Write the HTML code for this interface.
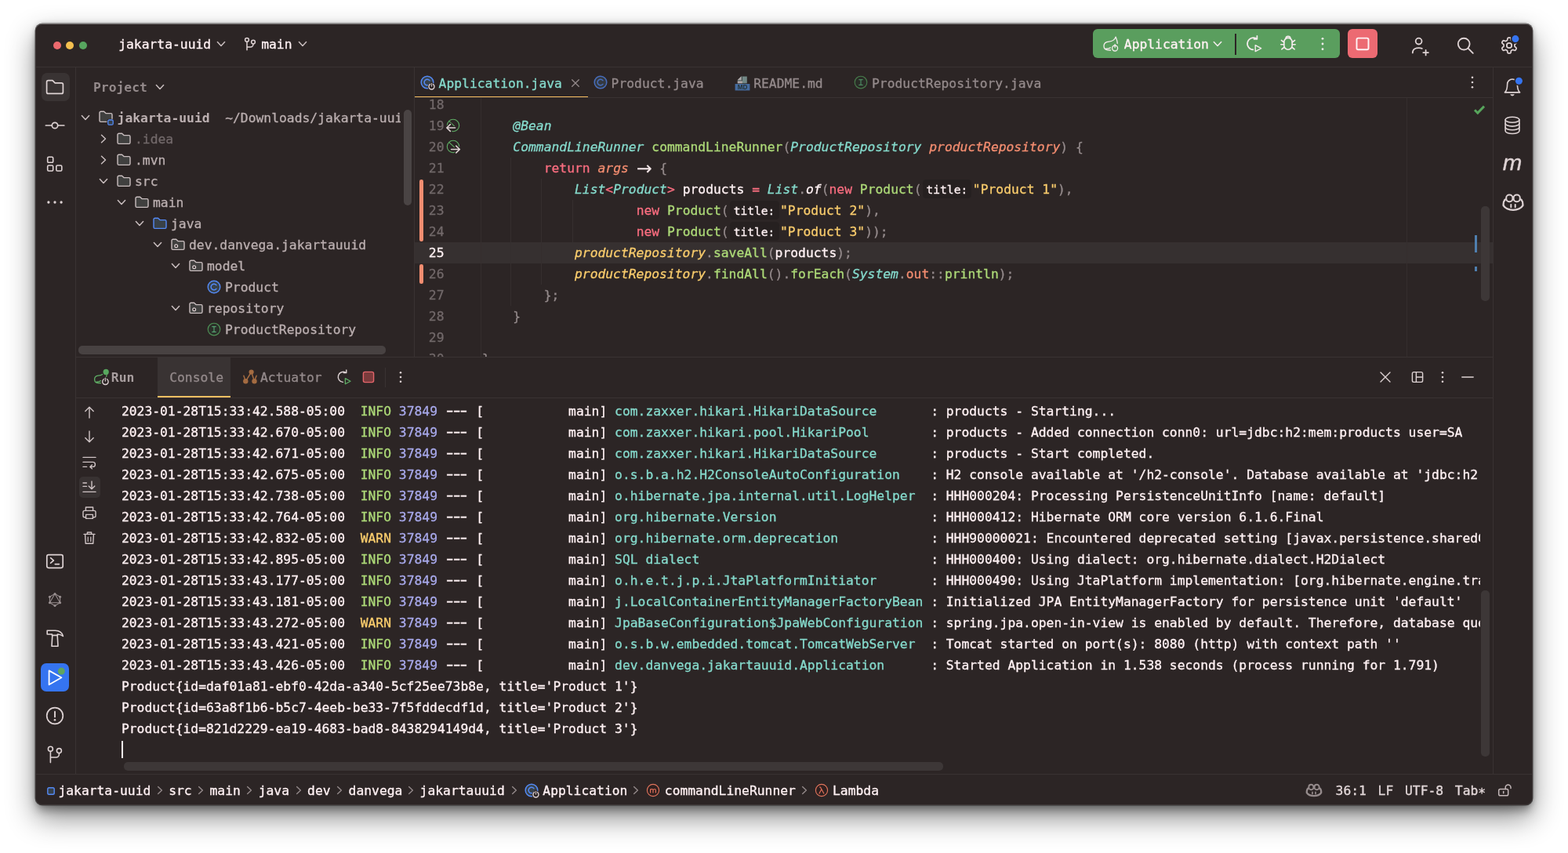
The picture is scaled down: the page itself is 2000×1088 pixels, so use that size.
<!DOCTYPE html>
<html lang="en"><head><meta charset="utf-8"><title>jakarta-uuid – Application.java</title>
<style>
html,body{margin:0;padding:0;background:#fff;}
body{width:2000px;height:1088px;position:relative;overflow:hidden;font-family:"DejaVu Sans Mono","Liberation Mono",monospace;font-size:16.33px;line-height:27px;color:#fff1f3;-webkit-text-stroke:0.3px currentColor;}
#win{position:absolute;left:45.2px;top:30px;width:1909.6px;height:997.4px;background:#2c2525;border-radius:9px;box-shadow:0 0 0 0.5px rgba(0,0,0,.55),0 16px 36px rgba(0,0,0,.46),0 9px 12px -2px rgba(0,0,0,.30),0 0 6px rgba(0,0,0,.22);}
#clip{position:absolute;left:45.2px;top:30px;width:1909.6px;height:997.4px;border-radius:9px;overflow:hidden;}
#in{position:absolute;left:-45.2px;top:-30px;width:2000px;height:1088px;will-change:transform;}
#rim{position:absolute;left:45.2px;top:30px;width:1909.6px;height:997.4px;border-radius:9px;box-shadow:inset 0 0 0 1px rgba(255,255,255,.09),inset 0 1px 0 0 rgba(255,255,255,.16);pointer-events:none;}
.t{position:absolute;white-space:pre;height:27px;}
.b{position:absolute;display:block;}
.bd{font-weight:bold;-webkit-text-stroke:0;}
.it{font-style:italic;}
i{font-style:italic;}
span.r{color:#fb6e80} span.o{color:#f38d70} span.y{color:#f9cc6c} span.g{color:#adda78}
.hint{display:inline-block;font-size:14.55px;line-height:23px;padding:1.3px 4.2px 0 4.4px;margin:0 1.4px 0 1.7px;background:#262020;border-radius:4.5px;color:#fff1f3;width:53.7px;box-sizing:content-box;}
.arrow{display:inline-block;width:19.66px;text-align:center;font-family:'DejaVu Sans',sans-serif;font-size:24px;line-height:10px;position:relative;top:2.7px;-webkit-text-stroke:0;color:#f3e6e8;}
.dash{display:inline-block;width:29.49px;white-space:pre;}
.dash>span{display:inline-block;letter-spacing:-4.47px;transform:translate(-2.5px,-1px) scaleX(1.66);transform-origin:0 50%;}
span.bl{color:#85dacc} span.p{color:#a8a9eb} span.d{color:#948a8b} span.w{color:#fff1f3}
</style></head><body>
<div id="win"></div>
<div id="clip"><div id="in">
<div class="b" style="left:67.60px;top:52.60px;width:10.40px;height:10.40px;background:#ec6a6e;border-radius:50%"></div>
<div class="b" style="left:84.00px;top:52.60px;width:10.40px;height:10.40px;background:#f4bf4f;border-radius:50%"></div>
<div class="b" style="left:100.60px;top:52.60px;width:10.40px;height:10.40px;background:#57a55f;border-radius:50%"></div>
<div class="t " style="left:151.20px;top:42.64px;">jakarta-uuid</div>
<div class="t " style="left:333.20px;top:42.64px;">main</div>
<div class="b" style="left:1393.80px;top:37.20px;width:315.40px;height:37.00px;background:#5a9e5e;border-radius:6px"></div>
<div class="t " style="left:1433.80px;top:42.64px;">Application</div>
<div class="b" style="left:1575.00px;top:43.20px;width:1.60px;height:26.60px;background:#2c2525;"></div>
<div class="b" style="left:1719.20px;top:37.20px;width:37.60px;height:37.00px;background:#ec6a72;border-radius:6px"></div>
<div class="t bd" style="left:119.00px;top:97.64px;color:#948a8b;">Project</div>
<div class="t bd" style="left:149.60px;top:137.24px;color:#bcb0b1;">jakarta-uuid</div>
<div class="t " style="left:172.00px;top:164.24px;color:#72696a;">.idea</div>
<div class="t " style="left:172.00px;top:191.24px;color:#bbafb0;">.mvn</div>
<div class="t " style="left:172.00px;top:218.24px;color:#bbafb0;">src</div>
<div class="t " style="left:195.00px;top:245.24px;color:#bbafb0;">main</div>
<div class="t " style="left:218.00px;top:272.24px;color:#bbafb0;">java</div>
<div class="t " style="left:241.00px;top:299.24px;color:#bbafb0;">dev.danvega.jakartauuid</div>
<div class="t " style="left:264.00px;top:326.24px;color:#bbafb0;">model</div>
<div class="t " style="left:287.00px;top:353.24px;color:#bbafb0;">Product</div>
<div class="t " style="left:264.00px;top:380.24px;color:#bbafb0;">repository</div>
<div class="t " style="left:287.00px;top:407.24px;color:#bbafb0;">ProductRepository</div>
<div class="t" style="left:287.2px;top:137.24px;width:224px;overflow:hidden;color:#bbafb0">~/Downloads/jakarta-uuid</div>
<div class="b" style="left:514.60px;top:140.00px;width:10.00px;height:122.00px;background:#4a4444;border-radius:5px"></div>
<div class="b" style="left:100.00px;top:441.00px;width:392.00px;height:10.50px;background:#484242;border-radius:5px"></div>
<div class="t " style="left:559.60px;top:92.64px;color:#85dacc;">Application.java</div>
<div class="b" style="left:529.00px;top:122.70px;width:221.20px;height:2.60px;background:#f9c062;"></div>
<div class="t " style="left:779.60px;top:92.64px;color:#948a8b;">Product.java</div>
<div class="t " style="left:961.20px;top:92.64px;color:#948a8b;">README.md</div>
<div class="t " style="left:1112.00px;top:92.64px;color:#948a8b;">ProductRepository.java</div>
<div class="b" style="left:529.00px;top:308.80px;width:1375.00px;height:27.00px;background:#363030;"></div>
<div class="b" style="left:612.50px;top:125.00px;width:1.00px;height:331.00px;background:#352e2e;"></div>
<div class="b" style="left:1794.00px;top:125.00px;width:1.00px;height:331.00px;background:#352e2e;"></div>
<div class="b" style="left:650.90px;top:200.80px;width:1.00px;height:189.00px;background:#352e2e;"></div>
<div class="b" style="left:690.40px;top:227.80px;width:1.00px;height:135.00px;background:#352e2e;"></div>
<div class="b" style="left:729.60px;top:254.80px;width:1.00px;height:54.00px;background:#352e2e;"></div>
<div class="b" style="left:535.20px;top:228.80px;width:4.60px;height:79.00px;background:#f38d70;border-radius:2.3px"></div>
<div class="b" style="left:535.20px;top:336.80px;width:4.60px;height:25.00px;background:#f38d70;border-radius:2.3px"></div>
<div class="t " style="left:546.80px;top:120.14px;color:#72696a;">18</div>
<div class="t " style="left:546.80px;top:147.14px;color:#72696a;">19</div>
<div class="t " style="left:546.80px;top:174.14px;color:#72696a;">20</div>
<div class="t " style="left:546.80px;top:201.14px;color:#72696a;">21</div>
<div class="t " style="left:546.80px;top:228.14px;color:#72696a;">22</div>
<div class="t " style="left:546.80px;top:255.14px;color:#72696a;">23</div>
<div class="t " style="left:546.80px;top:282.14px;color:#72696a;">24</div>
<div class="t " style="left:546.80px;top:309.14px;color:#fff1f3;">25</div>
<div class="t " style="left:546.80px;top:336.14px;color:#72696a;">26</div>
<div class="t " style="left:546.80px;top:363.14px;color:#72696a;">27</div>
<div class="t " style="left:546.80px;top:390.14px;color:#72696a;">28</div>
<div class="t " style="left:546.80px;top:417.14px;color:#72696a;">29</div>
<div class="t " style="left:546.80px;top:444.14px;color:#72696a;">30</div>
<div class="t " style="left:654.33px;top:147.14px;"><span class="bl"><i>@Bean</i></span></div>
<div class="t " style="left:654.33px;top:174.14px;"><span class="bl"><i>CommandLineRunner</i></span> <span class="g">commandLineRunner</span><span class="d">(</span><span class="bl"><i>ProductRepository</i></span> <span class="o"><i>productRepository</i></span><span class="d">) {</span></div>
<div class="t " style="left:693.65px;top:201.14px;"><span class="r">return</span> <span class="o"><i>args</i></span> <span class="arrow">&#x2192;</span> <span class="d">{</span></div>
<div class="t " style="left:732.98px;top:228.14px;"><span class="bl"><i>List</i></span><span class="r">&lt;</span><span class="bl"><i>Product</i></span><span class="r">&gt;</span> products <span class="r">=</span> <span class="bl"><i>List</i></span><span class="d">.</span><i>of</i><span class="d">(</span><span class="r">new</span> <span class="g">Product</span><span class="d">(</span><span class="hint">title:</span><span class="y">"Product 1"</span><span class="d">),</span></div>
<div class="t " style="left:811.63px;top:255.14px;"><span class="r">new</span> <span class="g">Product</span><span class="d">(</span><span class="hint">title:</span><span class="y">"Product 2"</span><span class="d">),</span></div>
<div class="t " style="left:811.63px;top:282.14px;"><span class="r">new</span> <span class="g">Product</span><span class="d">(</span><span class="hint">title:</span><span class="y">"Product 3"</span><span class="d">));</span></div>
<div class="t " style="left:732.98px;top:309.14px;"><span class="y"><i>productRepository</i></span><span class="d">.</span><span class="g">saveAll</span><span class="d">(</span>products<span class="d">);</span></div>
<div class="t " style="left:732.98px;top:336.14px;"><span class="y"><i>productRepository</i></span><span class="d">.</span><span class="g">findAll</span><span class="d">().</span><span class="g">forEach</span><span class="d">(</span><span class="bl"><i>System</i></span><span class="d">.</span><span class="o">out</span><span class="d">::</span><span class="g">println</span><span class="d">);</span></div>
<div class="t " style="left:693.65px;top:363.14px;"><span class="d">};</span></div>
<div class="t " style="left:654.33px;top:390.14px;"><span class="d">}</span></div>
<div class="t " style="left:615.00px;top:444.14px;"><span class="d">}</span></div>
<div class="b" style="left:529.00px;top:455.00px;width:1375.00px;height:1.00px;background:#393232;"></div>
<div class="b" style="left:1889.00px;top:263.00px;width:10.50px;height:121.00px;background:#3d3737;border-radius:5px"></div>
<div class="b" style="left:1881.20px;top:300.00px;width:2.70px;height:22.00px;background:#4f7fae;"></div>
<div class="b" style="left:1881.20px;top:340.00px;width:2.70px;height:6.00px;background:#4f7fae;"></div>
<div class="b" style="left:96.00px;top:456.00px;width:1808.00px;height:531.00px;background:#2c2525;"></div>
<div class="b" style="left:201.20px;top:456.00px;width:92.60px;height:49.50px;background:#393333;"></div>
<div class="b" style="left:201.20px;top:504.80px;width:92.60px;height:2.40px;background:#f9c062;"></div>
<div class="b" style="left:96.00px;top:506.50px;width:1808.00px;height:1.00px;background:#393232;"></div>
<div class="t bd" style="left:141.80px;top:467.74px;color:#a89e9f;">Run</div>
<div class="t " style="left:216.20px;top:467.74px;color:#948a8b;">Console</div>
<div class="t " style="left:332.00px;top:467.74px;color:#948a8b;">Actuator</div>
<div class="b" style="left:491.00px;top:469.00px;width:1.00px;height:25.00px;background:#3a3333;"></div>
<div class="b" style="left:154.9px;top:507px;width:1732.6999999999998px;height:470px;overflow:hidden">
<div class="t" style="left:0;top:3.84px">2023-01-28T15:33:42.588-05:00  <span class="g">INFO</span> <span class="p">37849</span> <span class="dash"><span>---</span></span> [           main] <span class="bl">com.zaxxer.hikari.HikariDataSource      </span> : products - Starting...</div>
<div class="t" style="left:0;top:30.84px">2023-01-28T15:33:42.670-05:00  <span class="g">INFO</span> <span class="p">37849</span> <span class="dash"><span>---</span></span> [           main] <span class="bl">com.zaxxer.hikari.pool.HikariPool       </span> : products - Added connection conn0: url=jdbc:h2:mem:products user=SA</div>
<div class="t" style="left:0;top:57.84px">2023-01-28T15:33:42.671-05:00  <span class="g">INFO</span> <span class="p">37849</span> <span class="dash"><span>---</span></span> [           main] <span class="bl">com.zaxxer.hikari.HikariDataSource      </span> : products - Start completed.</div>
<div class="t" style="left:0;top:84.84px">2023-01-28T15:33:42.675-05:00  <span class="g">INFO</span> <span class="p">37849</span> <span class="dash"><span>---</span></span> [           main] <span class="bl">o.s.b.a.h2.H2ConsoleAutoConfiguration   </span> : H2 console available at '/h2-console'. Database available at 'jdbc:h2:mem:products'</div>
<div class="t" style="left:0;top:111.84px">2023-01-28T15:33:42.738-05:00  <span class="g">INFO</span> <span class="p">37849</span> <span class="dash"><span>---</span></span> [           main] <span class="bl">o.hibernate.jpa.internal.util.LogHelper </span> : HHH000204: Processing PersistenceUnitInfo [name: default]</div>
<div class="t" style="left:0;top:138.84px">2023-01-28T15:33:42.764-05:00  <span class="g">INFO</span> <span class="p">37849</span> <span class="dash"><span>---</span></span> [           main] <span class="bl">org.hibernate.Version                   </span> : HHH000412: Hibernate ORM core version 6.1.6.Final</div>
<div class="t" style="left:0;top:165.84px">2023-01-28T15:33:42.832-05:00  <span class="y">WARN</span> <span class="p">37849</span> <span class="dash"><span>---</span></span> [           main] <span class="bl">org.hibernate.orm.deprecation           </span> : HHH90000021: Encountered deprecated setting [javax.persistence.sharedCache.mode]</div>
<div class="t" style="left:0;top:192.84px">2023-01-28T15:33:42.895-05:00  <span class="g">INFO</span> <span class="p">37849</span> <span class="dash"><span>---</span></span> [           main] <span class="bl">SQL dialect                             </span> : HHH000400: Using dialect: org.hibernate.dialect.H2Dialect</div>
<div class="t" style="left:0;top:219.84px">2023-01-28T15:33:43.177-05:00  <span class="g">INFO</span> <span class="p">37849</span> <span class="dash"><span>---</span></span> [           main] <span class="bl">o.h.e.t.j.p.i.JtaPlatformInitiator      </span> : HHH000490: Using JtaPlatform implementation: [org.hibernate.engine.transaction.jta]</div>
<div class="t" style="left:0;top:246.84px">2023-01-28T15:33:43.181-05:00  <span class="g">INFO</span> <span class="p">37849</span> <span class="dash"><span>---</span></span> [           main] <span class="bl">j.LocalContainerEntityManagerFactoryBean</span> : Initialized JPA EntityManagerFactory for persistence unit 'default'</div>
<div class="t" style="left:0;top:273.84px">2023-01-28T15:33:43.272-05:00  <span class="y">WARN</span> <span class="p">37849</span> <span class="dash"><span>---</span></span> [           main] <span class="bl">JpaBaseConfiguration$JpaWebConfiguration</span> : spring.jpa.open-in-view is enabled by default. Therefore, database queries may be performed</div>
<div class="t" style="left:0;top:300.84px">2023-01-28T15:33:43.421-05:00  <span class="g">INFO</span> <span class="p">37849</span> <span class="dash"><span>---</span></span> [           main] <span class="bl">o.s.b.w.embedded.tomcat.TomcatWebServer </span> : Tomcat started on port(s): 8080 (http) with context path ''</div>
<div class="t" style="left:0;top:327.84px">2023-01-28T15:33:43.426-05:00  <span class="g">INFO</span> <span class="p">37849</span> <span class="dash"><span>---</span></span> [           main] <span class="bl">dev.danvega.jakartauuid.Application     </span> : Started Application in 1.538 seconds (process running for 1.791)</div>
<div class="t" style="left:0;top:354.84px">Product{id=daf01a81-ebf0-42da-a340-5cf25ee73b8e, title='Product 1'}</div>
<div class="t" style="left:0;top:381.84px">Product{id=63a8f1b6-b5c7-4eeb-be33-7f5fddecdf1d, title='Product 2'}</div>
<div class="t" style="left:0;top:408.84px">Product{id=821d2229-ea19-4683-bad8-8438294149d4, title='Product 3'}</div>
</div>
<div class="b" style="left:154.60px;top:945.00px;width:2.20px;height:21.50px;background:#fff1f3;"></div>
<div class="b" style="left:1889.00px;top:753.00px;width:10.50px;height:212.00px;background:#3d3737;border-radius:5px"></div>
<div class="b" style="left:158.00px;top:972.00px;width:1045.00px;height:10.50px;background:#3d3737;border-radius:5px"></div>
<div class="b" style="left:100.60px;top:608.20px;width:27.60px;height:27.00px;background:#383232;border-radius:5px"></div>
<div class="t " style="left:74.40px;top:994.64px;">jakarta-uuid</div>
<div class="t " style="left:215.20px;top:994.64px;">src</div>
<div class="t " style="left:267.50px;top:994.64px;">main</div>
<div class="t " style="left:329.70px;top:994.64px;">java</div>
<div class="t " style="left:392.10px;top:994.64px;">dev</div>
<div class="t " style="left:444.60px;top:994.64px;">danvega</div>
<div class="t " style="left:535.60px;top:994.64px;">jakartauuid</div>
<div class="t " style="left:692.30px;top:994.64px;">Application</div>
<div class="t " style="left:847.80px;top:994.64px;">commandLineRunner</div>
<div class="t " style="left:1062.00px;top:994.64px;">Lambda</div>
<div class="t " style="left:1703.60px;top:994.64px;color:#e2d7d8;">36:1</div>
<div class="t " style="left:1757.60px;top:994.64px;color:#e2d7d8;">LF</div>
<div class="t " style="left:1792.00px;top:994.64px;color:#e2d7d8;">UTF-8</div>
<div class="t " style="left:1855.80px;top:994.64px;color:#e2d7d8;">Tab<span style="position:relative;top:3.2px">*</span></div>
<div class="b" style="left:46.00px;top:30.00px;width:1908.00px;height:1.00px;background:rgba(255,255,255,.22);"></div>
<div class="b" style="left:46.00px;top:85.00px;width:1908.00px;height:1.00px;background:#393232;"></div>
<div class="b" style="left:95.50px;top:86.00px;width:1.00px;height:902.00px;background:#393232;"></div>
<div class="b" style="left:1904.00px;top:86.00px;width:1.00px;height:902.00px;background:#393232;"></div>
<div class="b" style="left:528.00px;top:86.00px;width:1.00px;height:370.00px;background:#393232;"></div>
<div class="b" style="left:96.00px;top:455.00px;width:1808.00px;height:1.00px;background:#393232;"></div>
<div class="b" style="left:46.00px;top:987.00px;width:1908.00px;height:1.00px;background:#393232;"></div>
<div class="b" style="left:529.00px;top:124.00px;width:1375.00px;height:1.00px;background:#393232;"></div>
<div class="b" style="left:96.00px;top:506.50px;width:1808.00px;height:1.00px;background:#393232;"></div>
<svg class="b" style="left:273.90px;top:47.60px;overflow:visible;" width="16" height="16" viewBox="-8 -8 16 16" fill="none" stroke-linecap="round" stroke-linejoin="round"><path d="M-4.6,-2.4 L0,2.4 L4.6,-2.4" stroke="#c9bebf" stroke-width="1.5"/></svg>
<svg class="b" style="left:378.10px;top:47.60px;overflow:visible;" width="16" height="16" viewBox="-8 -8 16 16" fill="none" stroke-linecap="round" stroke-linejoin="round"><path d="M-4.6,-2.4 L0,2.4 L4.6,-2.4" stroke="#c9bebf" stroke-width="1.5"/></svg>
<svg class="b" style="left:304.80px;top:41.70px;overflow:visible;" width="28" height="28" viewBox="-14 -14 28 28" fill="none" stroke-linecap="round" stroke-linejoin="round"><g stroke="#ded3d4" stroke-width="1.5"><circle cx="-4" cy="-5.2" r="2.4"/><circle cx="4" cy="-2.4" r="2.4"/><path d="M-4,-2.8 V7.8 M4,0 v0.6 a3.4,3.4 0 0 1 -3.4,3.4 H-4"/></g></svg>
<svg class="b" style="left:1402.50px;top:41.50px;overflow:visible;" width="28" height="28" viewBox="-14 -14 28 28" fill="none" stroke-linecap="round" stroke-linejoin="round"><g stroke="#f6ecee" stroke-width="1.3"><path d="M6.1,-8.9 C4.6,-4.6 1.6,-3.2 -2.6,-2.9 C-6.6,-2.6 -9,-0.4 -9,2.6 C-9,5.6 -6.8,7.6 -4.4,7.9 L-0.4,8 M6.1,-8.9 C7.4,-5.6 8.2,-2.9 8.3,-0.6 M-6.6,6.2 C-4,6.4 -2.2,5.9 -0.6,4.9"/><circle cx="5.1" cy="5.5" r="3.5"/><path d="M5.1,0.6 V4.6" /></g></svg>
<svg class="b" style="left:1545.00px;top:48.00px;overflow:visible;" width="16" height="16" viewBox="-8 -8 16 16" fill="none" stroke-linecap="round" stroke-linejoin="round"><path d="M-4.7,-2.5 L0,2.5 L4.7,-2.5" stroke="#f6ecee" stroke-width="1.5"/></svg>
<svg class="b" style="left:1584.50px;top:41.50px;overflow:visible;" width="28" height="28" viewBox="-14 -14 28 28" fill="none" stroke-linecap="round" stroke-linejoin="round"><g stroke="#f6ecee" stroke-width="1.7"><path d="M3.4,-6.9 A7.6,7.6 0 1 0 -0.6,7.3"/><path d="M4.4,-10.2 V-6.2 H0.4"/><path d="M2.2,1.6 L9.6,5.6 L2.2,9.6 Z" stroke-width="1.4"/></g></svg>
<svg class="b" style="left:1628.80px;top:41.00px;overflow:visible;" width="28" height="28" viewBox="-14 -14 28 28" fill="none" stroke-linecap="round" stroke-linejoin="round"><g stroke="#f6ecee" stroke-width="1.6"><path d="M-5.2,-1.4 a5.2,5.2 0 0 1 10.4,0 V3 a5.2,5.2 0 0 1 -10.4,0 Z"/><path d="M-3,-5.6 a3,3 0 0 1 6,0"/><path d="M-5.2,-1 L-8.6,-3.6 M5.2,-1 L8.6,-3.6 M-5.2,1.8 H-9.2 M5.2,1.8 H9.2 M-4.6,5 L-8.2,7.8 M4.6,5 L8.2,7.8"/></g></svg>
<svg class="b" style="left:1677.00px;top:45.50px;overflow:visible;" width="20" height="20" viewBox="-10 -10 20 20" fill="none" stroke-linecap="round" stroke-linejoin="round"><circle cx="0" cy="-6.7" r="1.4" fill="#f6ecee"/><circle cx="0" cy="0" r="1.4" fill="#f6ecee"/><circle cx="0" cy="6.7" r="1.4" fill="#f6ecee"/></svg>
<svg class="b" style="left:1724.00px;top:41.50px;overflow:visible;" width="28" height="28" viewBox="-14 -14 28 28" fill="none" stroke-linecap="round" stroke-linejoin="round"><rect x="-7.5" y="-7.4" width="15" height="14.6" rx="1.8" stroke="#fff4f5" stroke-width="1.9"/></svg>
<svg class="b" style="left:1798.00px;top:44.50px;overflow:visible;" width="28" height="28" viewBox="-14 -14 28 28" fill="none" stroke-linecap="round" stroke-linejoin="round"><g stroke="#ded3d4" stroke-width="1.8"><circle cx="-2.4" cy="-6.4" r="3.9"/><path d="M-10.2,8.4 C-10.2,3.2 -5.4,2.2 -2.2,2.2 C-0.6,2.2 0.8,2.4 1.8,2.8"/><path d="M6.6,4.8 V11.4 M3.3,8.1 H9.9"/></g></svg>
<svg class="b" style="left:1854.50px;top:44.40px;overflow:visible;" width="28" height="28" viewBox="-14 -14 28 28" fill="none" stroke-linecap="round" stroke-linejoin="round"><g stroke="#ded3d4" stroke-width="1.85"><circle cx="-1.8" cy="-1.9" r="7.4"/><path d="M3.6,3.6 L9.8,9.8"/></g></svg>
<svg class="b" style="left:1911.40px;top:44.40px;overflow:visible;" width="28" height="28" viewBox="-14 -14 28 28" fill="none" stroke-linecap="round" stroke-linejoin="round"><g stroke="#ded3d4" stroke-width="1.75"><path d="M0.00,-9.97 L0.43,-9.96 L0.87,-9.91 L1.29,-9.81 L1.69,-9.59 L2.01,-9.08 L2.19,-8.16 L2.28,-7.24 L2.45,-6.73 L2.68,-6.47 L2.94,-6.30 L3.20,-6.15 L3.46,-6.00 L3.72,-5.84 L3.99,-5.69 L4.26,-5.55 L4.60,-5.48 L5.13,-5.60 L5.98,-5.98 L6.86,-6.29 L7.46,-6.26 L7.85,-6.03 L8.15,-5.71 L8.41,-5.36 L8.64,-4.99 L8.84,-4.60 L9.02,-4.21 L9.15,-3.79 L9.15,-3.33 L8.87,-2.80 L8.16,-2.19 L7.41,-1.64 L7.05,-1.24 L6.94,-0.91 L6.92,-0.61 L6.92,-0.30 L6.93,-0.00 L6.92,0.30 L6.92,0.61 L6.94,0.91 L7.05,1.24 L7.41,1.64 L8.16,2.19 L8.87,2.80 L9.15,3.33 L9.15,3.79 L9.02,4.21 L8.84,4.60 L8.64,4.99 L8.41,5.36 L8.15,5.71 L7.85,6.03 L7.46,6.26 L6.86,6.29 L5.98,5.98 L5.13,5.60 L4.60,5.48 L4.26,5.55 L3.99,5.69 L3.72,5.84 L3.46,6.00 L3.20,6.15 L2.94,6.30 L2.68,6.47 L2.45,6.73 L2.28,7.24 L2.19,8.16 L2.01,9.08 L1.69,9.59 L1.29,9.81 L0.87,9.91 L0.43,9.96 L0.00,9.97 L-0.43,9.96 L-0.87,9.91 L-1.29,9.81 L-1.69,9.59 L-2.01,9.08 L-2.19,8.16 L-2.28,7.24 L-2.45,6.73 L-2.68,6.47 L-2.94,6.30 L-3.20,6.15 L-3.46,6.00 L-3.72,5.84 L-3.99,5.69 L-4.26,5.55 L-4.60,5.48 L-5.13,5.60 L-5.98,5.98 L-6.86,6.29 L-7.46,6.26 L-7.85,6.03 L-8.15,5.71 L-8.41,5.36 L-8.64,4.99 L-8.84,4.60 L-9.02,4.21 L-9.15,3.79 L-9.15,3.33 L-8.87,2.80 L-8.16,2.19 L-7.41,1.64 L-7.05,1.24 L-6.94,0.91 L-6.92,0.61 L-6.92,0.30 L-6.93,0.00 L-6.92,-0.30 L-6.92,-0.61 L-6.94,-0.91 L-7.05,-1.24 L-7.41,-1.64 L-8.16,-2.19 L-8.87,-2.80 L-9.15,-3.33 L-9.15,-3.79 L-9.02,-4.21 L-8.84,-4.60 L-8.64,-4.99 L-8.41,-5.36 L-8.15,-5.71 L-7.85,-6.03 L-7.46,-6.26 L-6.86,-6.29 L-5.98,-5.98 L-5.13,-5.60 L-4.60,-5.48 L-4.26,-5.55 L-3.99,-5.69 L-3.72,-5.84 L-3.46,-6.00 L-3.20,-6.15 L-2.94,-6.30 L-2.68,-6.47 L-2.45,-6.73 L-2.28,-7.24 L-2.19,-8.16 L-2.01,-9.08 L-1.69,-9.59 L-1.29,-9.81 L-0.87,-9.91 L-0.43,-9.96 Z"/><circle cx="0" cy="0" r="3.2"/></g><circle cx="7.9" cy="-8.4" r="6.2" fill="#2c2525"/><circle cx="7.9" cy="-8.4" r="4.5" fill="#3574f0"/></svg>
<div class="b" style="left:52.60px;top:93.00px;width:36.00px;height:36.20px;background:#393333;border-radius:7px"></div>
<svg class="b" style="left:56.20px;top:97.40px;overflow:visible;" width="28" height="28" viewBox="-14 -14 28 28" fill="none" stroke-linecap="round" stroke-linejoin="round"><path d="M-10.4,-6.4 a2,2 0 0 1 2,-2 h5.4 l3.2,3.2 h8.2 a2,2 0 0 1 2,2 v9.6 a2,2 0 0 1 -2,2 h-16.8 a2,2 0 0 1 -2,-2 z" stroke="#ded3d4" stroke-width="1.7"/></svg>
<svg class="b" style="left:56.30px;top:146.30px;overflow:visible;" width="28" height="28" viewBox="-14 -14 28 28" fill="none" stroke-linecap="round" stroke-linejoin="round"><g stroke="#ded3d4" stroke-width="1.7"><circle cx="0" cy="0" r="3.7"/><path d="M-11.6,0 H-3.7 M3.7,0 H11.8"/></g></svg>
<svg class="b" style="left:56.40px;top:195.40px;overflow:visible;" width="28" height="28" viewBox="-14 -14 28 28" fill="none" stroke-linecap="round" stroke-linejoin="round"><g stroke="#ded3d4" stroke-width="1.6"><rect x="-9.3" y="-8.7" width="7" height="7" rx="1.4"/><rect x="-9.3" y="2" width="7" height="7" rx="1.4"/><rect x="1.8" y="2" width="7" height="7" rx="1.4"/></g></svg>
<svg class="b" style="left:56.30px;top:244.40px;overflow:visible;" width="28" height="28" viewBox="-14 -14 28 28" fill="none" stroke-linecap="round" stroke-linejoin="round"><circle cx="-8.1" cy="0" r="1.65" fill="#ded3d4"/><circle cx="0" cy="0" r="1.65" fill="#ded3d4"/><circle cx="8.1" cy="0" r="1.65" fill="#ded3d4"/></svg>
<svg class="b" style="left:56.10px;top:702.20px;overflow:visible;" width="28" height="28" viewBox="-14 -14 28 28" fill="none" stroke-linecap="round" stroke-linejoin="round"><g stroke="#ded3d4" stroke-width="1.7"><rect x="-10.2" y="-8.3" width="20.4" height="16.6" rx="2.2"/><path d="M-5.4,-4.4 L-1.6,-1.1 L-5.4,2.2 M0.2,3.6 H5.4" stroke-width="1.6"/></g></svg>
<svg class="b" style="left:56.40px;top:751.00px;overflow:visible;" width="28" height="28" viewBox="-14 -14 28 28" fill="none" stroke-linecap="round" stroke-linejoin="round"><g stroke="#9a9091" stroke-width="1.05"><path d="M0.00,-7.60 L6.58,-3.80 L6.58,3.80 L0.00,7.60 L-6.58,3.80 L-6.58,-3.80 Z"/><path d="M0.00,-7.60 L6.58,3.80 L-6.58,3.80 Z"/></g><circle cx="0.00" cy="-7.60" r="1.5" fill="#9a9091"/><circle cx="6.58" cy="-3.80" r="1.5" fill="#9a9091"/><circle cx="6.58" cy="3.80" r="1.5" fill="#9a9091"/><circle cx="0.00" cy="7.60" r="1.5" fill="#9a9091"/><circle cx="-6.58" cy="3.80" r="1.5" fill="#9a9091"/><circle cx="-6.58" cy="-3.80" r="1.5" fill="#9a9091"/></svg>
<svg class="b" style="left:56.30px;top:800.20px;overflow:visible;" width="28" height="28" viewBox="-14 -14 28 28" fill="none" stroke-linecap="round" stroke-linejoin="round"><g stroke="#ded3d4" stroke-width="1.6"><path d="M-9.8,-9.8 H0.5 C5.4,-9.8 9.2,-7.4 10.4,-2.6 C8,-4.4 5.6,-5 3.4,-5 V-3.6 H-3.6 V-5 H-9.8 Z"/><path d="M-3.2,-3.6 L-4,10.2 H4 L3.2,-3.6"/></g></svg>
<div class="b" style="left:52.40px;top:845.80px;width:36.00px;height:36.00px;background:#3574f0;border-radius:7px"></div>
<svg class="b" style="left:56.30px;top:849.70px;overflow:visible;" width="28" height="28" viewBox="-14 -14 28 28" fill="none" stroke-linecap="round" stroke-linejoin="round"><path d="M-7.4,-8.6 L8.4,0.3 L-7.4,9.2 Z" stroke="#fff" stroke-width="1.8"/><circle cx="8.3" cy="-7.9" r="4.5" fill="#5fa55f"/></svg>
<svg class="b" style="left:56.30px;top:899.00px;overflow:visible;" width="28" height="28" viewBox="-14 -14 28 28" fill="none" stroke-linecap="round" stroke-linejoin="round"><g stroke="#ded3d4" stroke-width="1.7"><circle cx="0" cy="0" r="10.3"/><path d="M0,-5.2 V1.4" stroke-width="1.9"/></g><circle cx="0" cy="5.3" r="1.3" fill="#ded3d4"/></svg>
<svg class="b" style="left:56.20px;top:947.70px;overflow:visible;" width="28" height="28" viewBox="-14 -14 28 28" fill="none" stroke-linecap="round" stroke-linejoin="round"><g stroke="#ded3d4" stroke-width="1.6"><circle cx="-5.6" cy="-6.8" r="3"/><circle cx="5.4" cy="-4.4" r="3"/><path d="M-5.6,-3.8 V10.6 M5.4,-1.4 v1.4 a4,4 0 0 1 -4,4 H-5.6"/></g></svg>
<svg class="b" style="left:1915.20px;top:97.20px;overflow:visible;" width="28" height="28" viewBox="-14 -14 28 28" fill="none" stroke-linecap="round" stroke-linejoin="round"><g stroke="#ded3d4" stroke-width="1.6"><path d="M-9.6,6.9 C-7.4,4.8 -6.4,2.4 -6.4,-3.6 A6.4,6.4 0 0 1 6.4,-3.6 C6.4,2.4 7.4,4.8 9.6,6.9 Z"/></g><path d="M-2.8,9.3 H2.8 A2.9,2.9 0 0 1 -2.8,9.3 Z" fill="#ded3d4"/><circle cx="8.4" cy="-7.7" r="6.1" fill="#2c2525"/><circle cx="8.4" cy="-7.7" r="4.5" fill="#3574f0"/></svg>
<svg class="b" style="left:1915.40px;top:145.80px;overflow:visible;" width="28" height="28" viewBox="-14 -14 28 28" fill="none" stroke-linecap="round" stroke-linejoin="round"><g stroke="#ded3d4" stroke-width="1.6"><ellipse cx="0" cy="-7.2" rx="8.9" ry="3.5"/><path d="M-8.9,-7.2 V7 C-8.9,9 -4.9,10.5 0,10.5 C4.9,10.5 8.9,9 8.9,7 V-7.2"/><path d="M-8.9,-2.4 C-8.9,-0.4 -4.9,1.1 0,1.1 C4.9,1.1 8.9,-0.4 8.9,-2.4 M-8.9,2.3 C-8.9,4.3 -4.9,5.8 0,5.8 C4.9,5.8 8.9,4.3 8.9,2.3"/></g></svg>
<div class="b" style="left:1915.2px;top:191.1px;width:28px;height:34px;line-height:34px;transform:scaleX(1.07);font-family:'Liberation Sans',sans-serif;font-style:italic;font-size:27.6px;color:#ded3d4;text-align:center">m</div>
<svg class="b" style="left:1915.70px;top:244.40px;overflow:visible;" width="28" height="28" viewBox="-14 -14 28 28" fill="none" stroke-linecap="round" stroke-linejoin="round"><g stroke="#ded3d4" stroke-width="2"><rect x="-8.8" y="-9.4" width="8.2" height="8.6" rx="3.8"/><rect x="0.6" y="-9.4" width="8.2" height="8.6" rx="3.8"/><path d="M-10,-3.6 C-12.4,-1.6 -12.6,0.6 -12.4,4.2 C-10,8 -4.6,9.8 0,9.8 C4.6,9.8 10,8 12.4,4.2 C12.6,0.6 12.4,-1.6 10,-3.6" stroke-width="2.3"/><path d="M-2.7,3 V6.2 M2.7,3 V6.2" stroke-width="2"/></g><path d="M-10,-2 C-11.6,-0.6 -11.8,1 -11.6,3.8 C-9,7.4 -4.6,9 0,9 C4.6,9 9,7.4 11.6,3.8 C11.8,1 11.6,-0.6 10,-2 L9,0.2 L-9,0.2 Z" fill="#ded3d4" opacity="0"/></svg>
<svg class="b" style="left:196.40px;top:103.20px;overflow:visible;" width="16" height="16" viewBox="-8 -8 16 16" fill="none" stroke-linecap="round" stroke-linejoin="round"><path d="M-4.6,-2.4 L0,2.4 L4.6,-2.4" stroke="#c9bebf" stroke-width="1.5"/></svg>
<svg class="b" style="left:101.40px;top:141.50px;overflow:visible;" width="16" height="16" viewBox="-8 -8 16 16" fill="none" stroke-linecap="round" stroke-linejoin="round"><path d="M-4.6,-2.5 L0,2.5 L4.6,-2.5" stroke="#c9bebf" stroke-width="1.5"/></svg>
<svg class="b" style="left:120.70px;top:135.10px;overflow:visible;" width="28" height="28" viewBox="-14 -14 28 28" fill="none" stroke-linecap="round" stroke-linejoin="round"><path d="M-8,-5.2 a1.6,1.6 0 0 1 1.6,-1.6 h4 l2.4,2.4 h6.4 a1.6,1.6 0 0 1 1.6,1.6 v7.6 a1.6,1.6 0 0 1 -1.6,1.6 h-12.8 a1.6,1.6 0 0 1 -1.6,-1.6 z" fill="#40403f" stroke="#c9bebf" stroke-width="1.4"/><rect x="1.4" y="2.8" width="9" height="8.6" rx="2" fill="#2c2525"/><rect x="2.8" y="4" width="6.4" height="6.2" rx="1.5" fill="#36404a" stroke="#548af7" stroke-width="1.3"/></svg>
<svg class="b" style="left:123.80px;top:168.60px;overflow:visible;" width="16" height="16" viewBox="-8 -8 16 16" fill="none" stroke-linecap="round" stroke-linejoin="round"><path d="M-2.5,-4.7 L2.5,0 L-2.5,4.7" stroke="#c9bebf" stroke-width="1.5"/></svg>
<svg class="b" style="left:143.70px;top:162.70px;overflow:visible;" width="28" height="28" viewBox="-14 -14 28 28" fill="none" stroke-linecap="round" stroke-linejoin="round"><path d="M-8,-5.2 a1.6,1.6 0 0 1 1.6,-1.6 h4 l2.4,2.4 h6.4 a1.6,1.6 0 0 1 1.6,1.6 v7.6 a1.6,1.6 0 0 1 -1.6,1.6 h-12.8 a1.6,1.6 0 0 1 -1.6,-1.6 z" fill="#40403f" stroke="#c9bebf" stroke-width="1.4"/></svg>
<svg class="b" style="left:123.80px;top:195.60px;overflow:visible;" width="16" height="16" viewBox="-8 -8 16 16" fill="none" stroke-linecap="round" stroke-linejoin="round"><path d="M-2.5,-4.7 L2.5,0 L-2.5,4.7" stroke="#c9bebf" stroke-width="1.5"/></svg>
<svg class="b" style="left:143.70px;top:189.70px;overflow:visible;" width="28" height="28" viewBox="-14 -14 28 28" fill="none" stroke-linecap="round" stroke-linejoin="round"><path d="M-8,-5.2 a1.6,1.6 0 0 1 1.6,-1.6 h4 l2.4,2.4 h6.4 a1.6,1.6 0 0 1 1.6,1.6 v7.6 a1.6,1.6 0 0 1 -1.6,1.6 h-12.8 a1.6,1.6 0 0 1 -1.6,-1.6 z" fill="#40403f" stroke="#c9bebf" stroke-width="1.4"/></svg>
<svg class="b" style="left:123.80px;top:222.50px;overflow:visible;" width="16" height="16" viewBox="-8 -8 16 16" fill="none" stroke-linecap="round" stroke-linejoin="round"><path d="M-4.6,-2.5 L0,2.5 L4.6,-2.5" stroke="#c9bebf" stroke-width="1.5"/></svg>
<svg class="b" style="left:143.70px;top:216.70px;overflow:visible;" width="28" height="28" viewBox="-14 -14 28 28" fill="none" stroke-linecap="round" stroke-linejoin="round"><path d="M-8,-5.2 a1.6,1.6 0 0 1 1.6,-1.6 h4 l2.4,2.4 h6.4 a1.6,1.6 0 0 1 1.6,1.6 v7.6 a1.6,1.6 0 0 1 -1.6,1.6 h-12.8 a1.6,1.6 0 0 1 -1.6,-1.6 z" fill="#40403f" stroke="#c9bebf" stroke-width="1.4"/></svg>
<svg class="b" style="left:146.80px;top:249.50px;overflow:visible;" width="16" height="16" viewBox="-8 -8 16 16" fill="none" stroke-linecap="round" stroke-linejoin="round"><path d="M-4.6,-2.5 L0,2.5 L4.6,-2.5" stroke="#c9bebf" stroke-width="1.5"/></svg>
<svg class="b" style="left:166.70px;top:243.70px;overflow:visible;" width="28" height="28" viewBox="-14 -14 28 28" fill="none" stroke-linecap="round" stroke-linejoin="round"><path d="M-8,-5.2 a1.6,1.6 0 0 1 1.6,-1.6 h4 l2.4,2.4 h6.4 a1.6,1.6 0 0 1 1.6,1.6 v7.6 a1.6,1.6 0 0 1 -1.6,1.6 h-12.8 a1.6,1.6 0 0 1 -1.6,-1.6 z" fill="#40403f" stroke="#c9bebf" stroke-width="1.4"/></svg>
<svg class="b" style="left:169.80px;top:276.50px;overflow:visible;" width="16" height="16" viewBox="-8 -8 16 16" fill="none" stroke-linecap="round" stroke-linejoin="round"><path d="M-4.6,-2.5 L0,2.5 L4.6,-2.5" stroke="#c9bebf" stroke-width="1.5"/></svg>
<svg class="b" style="left:189.70px;top:270.70px;overflow:visible;" width="28" height="28" viewBox="-14 -14 28 28" fill="none" stroke-linecap="round" stroke-linejoin="round"><path d="M-8,-5.2 a1.6,1.6 0 0 1 1.6,-1.6 h4 l2.4,2.4 h6.4 a1.6,1.6 0 0 1 1.6,1.6 v7.6 a1.6,1.6 0 0 1 -1.6,1.6 h-12.8 a1.6,1.6 0 0 1 -1.6,-1.6 z" fill="#394147" stroke="#548af7" stroke-width="1.4"/></svg>
<svg class="b" style="left:192.80px;top:303.50px;overflow:visible;" width="16" height="16" viewBox="-8 -8 16 16" fill="none" stroke-linecap="round" stroke-linejoin="round"><path d="M-4.6,-2.5 L0,2.5 L4.6,-2.5" stroke="#c9bebf" stroke-width="1.5"/></svg>
<svg class="b" style="left:212.70px;top:297.70px;overflow:visible;" width="28" height="28" viewBox="-14 -14 28 28" fill="none" stroke-linecap="round" stroke-linejoin="round"><path d="M-8,-5.2 a1.6,1.6 0 0 1 1.6,-1.6 h4 l2.4,2.4 h6.4 a1.6,1.6 0 0 1 1.6,1.6 v7.6 a1.6,1.6 0 0 1 -1.6,1.6 h-12.8 a1.6,1.6 0 0 1 -1.6,-1.6 z" fill="#40403f" stroke="#c9bebf" stroke-width="1.4"/><circle cx="-2.3" cy="1.7" r="1.9" stroke="#ded3d4" stroke-width="1.2" fill="#2c2525"/></svg>
<svg class="b" style="left:215.80px;top:330.50px;overflow:visible;" width="16" height="16" viewBox="-8 -8 16 16" fill="none" stroke-linecap="round" stroke-linejoin="round"><path d="M-4.6,-2.5 L0,2.5 L4.6,-2.5" stroke="#c9bebf" stroke-width="1.5"/></svg>
<svg class="b" style="left:235.70px;top:324.70px;overflow:visible;" width="28" height="28" viewBox="-14 -14 28 28" fill="none" stroke-linecap="round" stroke-linejoin="round"><path d="M-8,-5.2 a1.6,1.6 0 0 1 1.6,-1.6 h4 l2.4,2.4 h6.4 a1.6,1.6 0 0 1 1.6,1.6 v7.6 a1.6,1.6 0 0 1 -1.6,1.6 h-12.8 a1.6,1.6 0 0 1 -1.6,-1.6 z" fill="#40403f" stroke="#c9bebf" stroke-width="1.4"/><circle cx="-2.3" cy="1.7" r="1.9" stroke="#ded3d4" stroke-width="1.2" fill="#2c2525"/></svg>
<svg class="b" style="left:258.90px;top:352.20px;overflow:visible;" width="28" height="28" viewBox="-14 -14 28 28" fill="none" stroke-linecap="round" stroke-linejoin="round"><circle cx="0" cy="0" r="7.8" fill="#38424b" stroke="#548af7" stroke-width="1.4"/><path d="M2.9,-2.4 A3.8,3.8 0 1 0 2.9,2.4" stroke="#548af7" stroke-width="1.5"/></svg>
<svg class="b" style="left:215.80px;top:384.50px;overflow:visible;" width="16" height="16" viewBox="-8 -8 16 16" fill="none" stroke-linecap="round" stroke-linejoin="round"><path d="M-4.6,-2.5 L0,2.5 L4.6,-2.5" stroke="#c9bebf" stroke-width="1.5"/></svg>
<svg class="b" style="left:235.70px;top:378.70px;overflow:visible;" width="28" height="28" viewBox="-14 -14 28 28" fill="none" stroke-linecap="round" stroke-linejoin="round"><path d="M-8,-5.2 a1.6,1.6 0 0 1 1.6,-1.6 h4 l2.4,2.4 h6.4 a1.6,1.6 0 0 1 1.6,1.6 v7.6 a1.6,1.6 0 0 1 -1.6,1.6 h-12.8 a1.6,1.6 0 0 1 -1.6,-1.6 z" fill="#40403f" stroke="#c9bebf" stroke-width="1.4"/><circle cx="-2.3" cy="1.7" r="1.9" stroke="#ded3d4" stroke-width="1.2" fill="#2c2525"/></svg>
<svg class="b" style="left:258.90px;top:406.20px;overflow:visible;" width="28" height="28" viewBox="-14 -14 28 28" fill="none" stroke-linecap="round" stroke-linejoin="round"><circle cx="0" cy="0" r="7.8" fill="#2b2f29" stroke="#4f9156" stroke-width="1.15"/><path d="M-2.2,-3.4 H2.2 M0,-3.4 V3.4 M-2.2,3.4 H2.2" stroke="#55a070" stroke-width="1.2"/></svg>
<svg class="b" style="left:531.20px;top:91.40px;overflow:visible;" width="28" height="28" viewBox="-14 -14 28 28" fill="none" stroke-linecap="round" stroke-linejoin="round"><circle cx="0" cy="0" r="7.8" fill="#38424b" stroke="#548af7" stroke-width="1.5"/><path d="M2.9,-2.4 A3.8,3.8 0 1 0 2.9,2.4" stroke="#548af7" stroke-width="1.5"/><circle cx="5.5" cy="5.5" r="5" fill="#2c2525"/><circle cx="5.5" cy="5.5" r="3.5" stroke="#ded3d4" stroke-width="1.4"/><path d="M5.5,0.8 V5" stroke="#2c2525" stroke-width="3"/><path d="M5.5,1.4 V5" stroke="#b9aeaf" stroke-width="1.4"/></svg>
<svg class="b" style="left:719.60px;top:91.80px;overflow:visible;" width="28" height="28" viewBox="-14 -14 28 28" fill="none" stroke-linecap="round" stroke-linejoin="round"><path d="M-4.3,-4.3 L4.3,4.3 M4.3,-4.3 L-4.3,4.3" stroke="#948a8b" stroke-width="1.3"/></svg>
<svg class="b" style="left:751.60px;top:91.40px;overflow:visible;opacity:.72" width="28" height="28" viewBox="-14 -14 28 28" fill="none" stroke-linecap="round" stroke-linejoin="round"><circle cx="0" cy="0" r="7.8" fill="#38424b" stroke="#548af7" stroke-width="1.5"/><path d="M2.9,-2.4 A3.8,3.8 0 1 0 2.9,2.4" stroke="#548af7" stroke-width="1.5"/></svg>
<svg class="b" style="left:933.30px;top:91.60px;overflow:visible;opacity:.85" width="28" height="28" viewBox="-14 -14 28 28" fill="none" stroke-linecap="round" stroke-linejoin="round"><path d="M-1.6,-8.6 H5.8 V0.2 H-6.2 V-4 Z" fill="#7f9a98"/><path d="M-6.2,-4 L-1.6,-8.6 V-4 Z" fill="#c9bfc0"/><path d="M-6.2,-3.2 H-0.8 V-8.6 H-0.2 V-2.6 H-6.2 Z" fill="#2c2525"/><path d="M-6.2,-2.6 H-0.2 V0.2 H-6.2 Z" fill="#c9bfc0"/><rect x="-9.4" y="1" width="18.8" height="8.4" fill="#4a78b4"/><text x="0" y="8.2" font-family="Liberation Sans, sans-serif" font-size="8.2" font-weight="bold" fill="#26383c" text-anchor="middle" stroke="none">MD</text></svg>
<svg class="b" style="left:1083.60px;top:91.40px;overflow:visible;opacity:.8" width="28" height="28" viewBox="-14 -14 28 28" fill="none" stroke-linecap="round" stroke-linejoin="round"><circle cx="0" cy="0" r="7.8" fill="#2b2f29" stroke="#4f9156" stroke-width="1.15"/><path d="M-2.2,-3.4 H2.2 M0,-3.4 V3.4 M-2.2,3.4 H2.2" stroke="#55a070" stroke-width="1.2"/></svg>
<svg class="b" style="left:1868.00px;top:94.60px;overflow:visible;" width="20" height="20" viewBox="-10 -10 20 20" fill="none" stroke-linecap="round" stroke-linejoin="round"><circle cx="0" cy="-6.3" r="1.3" fill="#ded3d4"/><circle cx="0" cy="0" r="1.3" fill="#ded3d4"/><circle cx="0" cy="6.3" r="1.3" fill="#ded3d4"/></svg>
<svg class="b" style="left:564.40px;top:145.90px;overflow:visible;" width="28" height="28" viewBox="-14 -14 28 28" fill="none" stroke-linecap="round" stroke-linejoin="round"><circle cx="0" cy="0" r="7.7" stroke="#5fad65" stroke-width="1.1"/><path d="M-5.4,-5.6 L1.4,0.6" stroke="#5fad65" stroke-width="1.1"/><path d="M-7.8,3 H2.6 M-3.6,-1.4 L-8.2,3 L-3.6,7.4" stroke="#2c2525" stroke-width="4"/><path d="M-7.8,3 H2.6 M-3.6,-1.4 L-8.2,3 L-3.6,7.4" stroke="#ded3d4" stroke-width="1.6"/></svg>
<svg class="b" style="left:564.40px;top:172.70px;overflow:visible;" width="28" height="28" viewBox="-14 -14 28 28" fill="none" stroke-linecap="round" stroke-linejoin="round"><circle cx="0" cy="0" r="7.7" stroke="#5fad65" stroke-width="1.1"/><path d="M-5.4,-5.6 L1.4,0.6" stroke="#5fad65" stroke-width="1.1"/><path d="M-2.4,3.5 H8 M3.8,-0.9 L8.4,3.5 L3.8,7.9" stroke="#2c2525" stroke-width="4"/><path d="M-2.4,3.5 H8 M3.8,-0.9 L8.4,3.5 L3.8,7.9" stroke="#ded3d4" stroke-width="1.6"/></svg>
<svg class="b" style="left:1872.60px;top:125.60px;overflow:visible;" width="28" height="28" viewBox="-14 -14 28 28" fill="none" stroke-linecap="round" stroke-linejoin="round"><path d="M-6,0.2 L-2.2,4 L6,-4.4" stroke="#57a55c" stroke-width="3" stroke-linecap="butt" stroke-linejoin="miter"/></svg>
<svg class="b" style="left:116.90px;top:467.60px;overflow:visible;" width="28" height="28" viewBox="-14 -14 28 28" fill="none" stroke-linecap="round" stroke-linejoin="round"><g stroke="#5fad65" stroke-width="1.3"><path d="M-0.4,-4.6 C-2,-3.4 -4,-3 -6,-2.8 C-8.6,-2.4 -10.4,-0.6 -10.4,1.8 C-10.4,4.6 -8.4,6.4 -5.8,6.6 L-2.4,6.7 M-7.6,5 C-5.4,5.2 -3.8,4.6 -2.4,3.6 M4.6,-1.6 L5,-3.4"/></g><circle cx="4.2" cy="-7.6" r="3.6" fill="#58a95f"/><circle cx="3.4" cy="4.8" r="5.6" fill="#2c2525"/><circle cx="3.4" cy="4.8" r="3.7" stroke="#ded3d4" stroke-width="1.4"/><path d="M3.4,-0.2 V3.6" stroke="#2c2525" stroke-width="3.2"/><path d="M3.4,0.2 V4" stroke="#bdb2b3" stroke-width="1.4"/></svg>
<svg class="b" style="left:304.60px;top:467.00px;overflow:visible;" width="28" height="28" viewBox="-14 -14 28 28" fill="none" stroke-linecap="round" stroke-linejoin="round"><g stroke="#a46b41" stroke-width="1.5"><path d="M1.6,-6.5 L-5.7,5.3 M1.6,-6.5 L5.5,5.3 M-5.7,5.3 L-8.1,-1.8 M5.5,5.3 L8.1,-1.8"/></g><circle cx="1.6" cy="-6.5" r="3.1" fill="#a46b41"/><circle cx="-5.7" cy="5.3" r="3.2" fill="#a46b41"/><circle cx="5.5" cy="5.3" r="3.2" fill="#a46b41"/></svg>
<svg class="b" style="left:424.40px;top:467.20px;overflow:visible;" width="28" height="28" viewBox="-14 -14 28 28" fill="none" stroke-linecap="round" stroke-linejoin="round"><g stroke="#ded3d4" stroke-width="1.4"><path d="M3,-6 A6.6,6.6 0 1 0 -0.6,6.4"/><path d="M3.8,-9 V-5.4 H0.2"/></g><path d="M2.4,1.6 L9,5.2 L2.4,8.8 Z" stroke="#5fad65" stroke-width="1.3"/></svg>
<svg class="b" style="left:456.40px;top:466.80px;overflow:visible;" width="28" height="28" viewBox="-14 -14 28 28" fill="none" stroke-linecap="round" stroke-linejoin="round"><rect x="-6.6" y="-6.6" width="13.2" height="13.2" rx="2" fill="#7a3b3c" stroke="#e4656b" stroke-width="1.4"/></svg>
<svg class="b" style="left:500.70px;top:471.00px;overflow:visible;" width="20" height="20" viewBox="-10 -10 20 20" fill="none" stroke-linecap="round" stroke-linejoin="round"><circle cx="0" cy="-5.8" r="1.3" fill="#ded3d4"/><circle cx="0" cy="0" r="1.3" fill="#ded3d4"/><circle cx="0" cy="5.8" r="1.3" fill="#ded3d4"/></svg>
<svg class="b" style="left:1753.40px;top:467.00px;overflow:visible;" width="28" height="28" viewBox="-14 -14 28 28" fill="none" stroke-linecap="round" stroke-linejoin="round"><path d="M-6,-6 L6,6 M6,-6 L-6,6" stroke="#ded3d4" stroke-width="1.4"/></svg>
<svg class="b" style="left:1794.40px;top:467.00px;overflow:visible;" width="28" height="28" viewBox="-14 -14 28 28" fill="none" stroke-linecap="round" stroke-linejoin="round"><g stroke="#ded3d4" stroke-width="1.4"><rect x="-6.6" y="-6.4" width="13.2" height="12.8" rx="1.8"/><path d="M-1.6,-6.4 V6.4 M-1.6,0 H6.6"/></g></svg>
<svg class="b" style="left:1830.40px;top:471.00px;overflow:visible;" width="20" height="20" viewBox="-10 -10 20 20" fill="none" stroke-linecap="round" stroke-linejoin="round"><circle cx="0" cy="-5.8" r="1.3" fill="#ded3d4"/><circle cx="0" cy="0" r="1.3" fill="#ded3d4"/><circle cx="0" cy="5.8" r="1.3" fill="#ded3d4"/></svg>
<svg class="b" style="left:1858.40px;top:467.00px;overflow:visible;" width="28" height="28" viewBox="-14 -14 28 28" fill="none" stroke-linecap="round" stroke-linejoin="round"><path d="M-7.2,0 H7.2" stroke="#ded3d4" stroke-width="1.4"/></svg>
<svg class="b" style="left:99.80px;top:511.80px;overflow:visible;" width="28" height="28" viewBox="-14 -14 28 28" fill="none" stroke-linecap="round" stroke-linejoin="round"><path d="M0,7 V-6.6 M-5.2,-1.6 L0,-6.8 L5.2,-1.6" stroke="#cfc4c5" stroke-width="1.4"/></svg>
<svg class="b" style="left:99.80px;top:543.40px;overflow:visible;" width="28" height="28" viewBox="-14 -14 28 28" fill="none" stroke-linecap="round" stroke-linejoin="round"><path d="M0,-7 V6.6 M-5.2,1.6 L0,6.8 L5.2,1.6" stroke="#cfc4c5" stroke-width="1.4"/></svg>
<svg class="b" style="left:99.80px;top:576.00px;overflow:visible;" width="28" height="28" viewBox="-14 -14 28 28" fill="none" stroke-linecap="round" stroke-linejoin="round"><path d="M-8,-6.6 H8 M-8,-0.6 H4.4 a3,3 0 0 1 0,6 H1 M-8,5.4 H-3.4 M3.4,3 L0.8,5.4 L3.4,7.8" stroke="#cfc4c5" stroke-width="1.4"/></svg>
<svg class="b" style="left:99.80px;top:607.40px;overflow:visible;" width="28" height="28" viewBox="-14 -14 28 28" fill="none" stroke-linecap="round" stroke-linejoin="round"><path d="M-8,-5 H-3.6 M-8,-0.6 H-3.6 M-8,6.4 H8 M3,-7 V2.6 M-0.8,-1 L3,2.8 L6.8,-1" stroke="#cfc4c5" stroke-width="1.4"/></svg>
<svg class="b" style="left:99.80px;top:640.00px;overflow:visible;" width="28" height="28" viewBox="-14 -14 28 28" fill="none" stroke-linecap="round" stroke-linejoin="round"><g stroke="#cfc4c5" stroke-width="1.4"><path d="M-4.6,-2.6 V-7 H4.6 V-2.6"/><rect x="-8" y="-2.6" width="16" height="8.4" rx="1.8"/><rect x="-4.4" y="2.4" width="8.8" height="5" fill="#2c2525"/></g></svg>
<svg class="b" style="left:99.80px;top:672.00px;overflow:visible;" width="28" height="28" viewBox="-14 -14 28 28" fill="none" stroke-linecap="round" stroke-linejoin="round"><g stroke="#cfc4c5" stroke-width="1.4"><path d="M-7,-4.6 H7 M-2.6,-4.8 V-7 H2.6 V-4.8"/><path d="M-5.4,-4.4 L-4.8,7.2 H4.8 L5.4,-4.4"/><path d="M-1.8,-1 V4.4 M1.8,-1 V4.4" stroke-width="1.2"/></g></svg>
<svg class="b" style="left:50.80px;top:994.80px;overflow:visible;" width="28" height="28" viewBox="-14 -14 28 28" fill="none" stroke-linecap="round" stroke-linejoin="round"><rect x="-4.2" y="-4.2" width="8.4" height="8.4" rx="1.8" fill="#36404a" stroke="#548af7" stroke-width="1.4"/></svg>
<svg class="b" style="left:196.25px;top:1000.00px;overflow:visible;" width="16" height="16" viewBox="-8 -8 16 16" fill="none" stroke-linecap="round" stroke-linejoin="round"><path d="M-2.4,-4.4 L2.4,0 L-2.4,4.4" stroke="#948a8b" stroke-width="1.4"/></svg>
<svg class="b" style="left:248.25px;top:1000.00px;overflow:visible;" width="16" height="16" viewBox="-8 -8 16 16" fill="none" stroke-linecap="round" stroke-linejoin="round"><path d="M-2.4,-4.4 L2.4,0 L-2.4,4.4" stroke="#948a8b" stroke-width="1.4"/></svg>
<svg class="b" style="left:310.00px;top:1000.00px;overflow:visible;" width="16" height="16" viewBox="-8 -8 16 16" fill="none" stroke-linecap="round" stroke-linejoin="round"><path d="M-2.4,-4.4 L2.4,0 L-2.4,4.4" stroke="#948a8b" stroke-width="1.4"/></svg>
<svg class="b" style="left:372.50px;top:1000.00px;overflow:visible;" width="16" height="16" viewBox="-8 -8 16 16" fill="none" stroke-linecap="round" stroke-linejoin="round"><path d="M-2.4,-4.4 L2.4,0 L-2.4,4.4" stroke="#948a8b" stroke-width="1.4"/></svg>
<svg class="b" style="left:424.50px;top:1000.00px;overflow:visible;" width="16" height="16" viewBox="-8 -8 16 16" fill="none" stroke-linecap="round" stroke-linejoin="round"><path d="M-2.4,-4.4 L2.4,0 L-2.4,4.4" stroke="#948a8b" stroke-width="1.4"/></svg>
<svg class="b" style="left:516.25px;top:1000.00px;overflow:visible;" width="16" height="16" viewBox="-8 -8 16 16" fill="none" stroke-linecap="round" stroke-linejoin="round"><path d="M-2.4,-4.4 L2.4,0 L-2.4,4.4" stroke="#948a8b" stroke-width="1.4"/></svg>
<svg class="b" style="left:647.50px;top:1000.00px;overflow:visible;" width="16" height="16" viewBox="-8 -8 16 16" fill="none" stroke-linecap="round" stroke-linejoin="round"><path d="M-2.4,-4.4 L2.4,0 L-2.4,4.4" stroke="#948a8b" stroke-width="1.4"/></svg>
<svg class="b" style="left:803.00px;top:1000.00px;overflow:visible;" width="16" height="16" viewBox="-8 -8 16 16" fill="none" stroke-linecap="round" stroke-linejoin="round"><path d="M-2.4,-4.4 L2.4,0 L-2.4,4.4" stroke="#948a8b" stroke-width="1.4"/></svg>
<svg class="b" style="left:1018.00px;top:1000.00px;overflow:visible;" width="16" height="16" viewBox="-8 -8 16 16" fill="none" stroke-linecap="round" stroke-linejoin="round"><path d="M-2.4,-4.4 L2.4,0 L-2.4,4.4" stroke="#948a8b" stroke-width="1.4"/></svg>
<svg class="b" style="left:663.50px;top:993.60px;overflow:visible;" width="28" height="28" viewBox="-14 -14 28 28" fill="none" stroke-linecap="round" stroke-linejoin="round"><circle cx="0" cy="0" r="7.8" fill="#38424b" stroke="#548af7" stroke-width="1.5"/><path d="M2.9,-2.4 A3.8,3.8 0 1 0 2.9,2.4" stroke="#548af7" stroke-width="1.5"/><circle cx="5.5" cy="5.5" r="5" fill="#2c2525"/><circle cx="5.5" cy="5.5" r="3.5" stroke="#ded3d4" stroke-width="1.4"/><path d="M5.5,0.8 V5" stroke="#2c2525" stroke-width="3"/><path d="M5.5,1.4 V5" stroke="#b9aeaf" stroke-width="1.4"/></svg>
<svg class="b" style="left:818.75px;top:993.60px;overflow:visible;" width="28" height="28" viewBox="-14 -14 28 28" fill="none" stroke-linecap="round" stroke-linejoin="round"><circle cx="0" cy="0" r="7.6" fill="#30201f" stroke="#e0745c" stroke-width="1.15"/><path d="M-3.4,3 V-1.2 M-3.4,-0.2 C-2.6,-2 0,-2 0,0 V3 M0,0 C0.8,-2 3.4,-2 3.4,0 V3" stroke="#e0705a" stroke-width="1.2"/></svg>
<svg class="b" style="left:1033.50px;top:993.60px;overflow:visible;" width="28" height="28" viewBox="-14 -14 28 28" fill="none" stroke-linecap="round" stroke-linejoin="round"><circle cx="0" cy="0" r="7.6" fill="#30201f" stroke="#e0745c" stroke-width="1.15"/><path d="M-2.6,-4 H-1.6 L2.8,4 M-0.2,-1.2 L-3,4" stroke="#e0705a" stroke-width="1.2"/></svg>
<svg class="b" style="left:1662.00px;top:994.00px;overflow:visible;" width="28" height="28" viewBox="-14 -14 28 28" fill="none" stroke-linecap="round" stroke-linejoin="round"><g stroke="#958b8c" stroke-width="1.9"><rect x="-6.6" y="-7.2" width="6" height="6.4" rx="2.8"/><rect x="0.6" y="-7.2" width="6" height="6.4" rx="2.8"/><path d="M-7.4,-2.6 C-9.2,-1 -9.4,0.6 -9.2,3.2 C-7.4,6 -3.4,7.2 0,7.2 C3.4,7.2 7.4,6 9.2,3.2 C9.4,0.6 9.2,-1 7.4,-2.6" stroke-width="2.3"/><path d="M-2,2.4 V4.6 M2,2.4 V4.6" stroke-width="1.7"/></g></svg>
<svg class="b" style="left:1905.00px;top:993.60px;overflow:visible;" width="28" height="28" viewBox="-14 -14 28 28" fill="none" stroke-linecap="round" stroke-linejoin="round"><g stroke="#c3b7b8" stroke-width="1.5"><rect x="-7.3" y="-1.4" width="12" height="8.2" rx="1.8"/><path d="M1.2,-1.6 V-3.6 a3.4,3.4 0 0 1 6.8,0 V-2.4"/><path d="M-1.3,1.6 V3.8"/></g></svg>
</div></div>
<div id="rim"></div>
</body></html>
